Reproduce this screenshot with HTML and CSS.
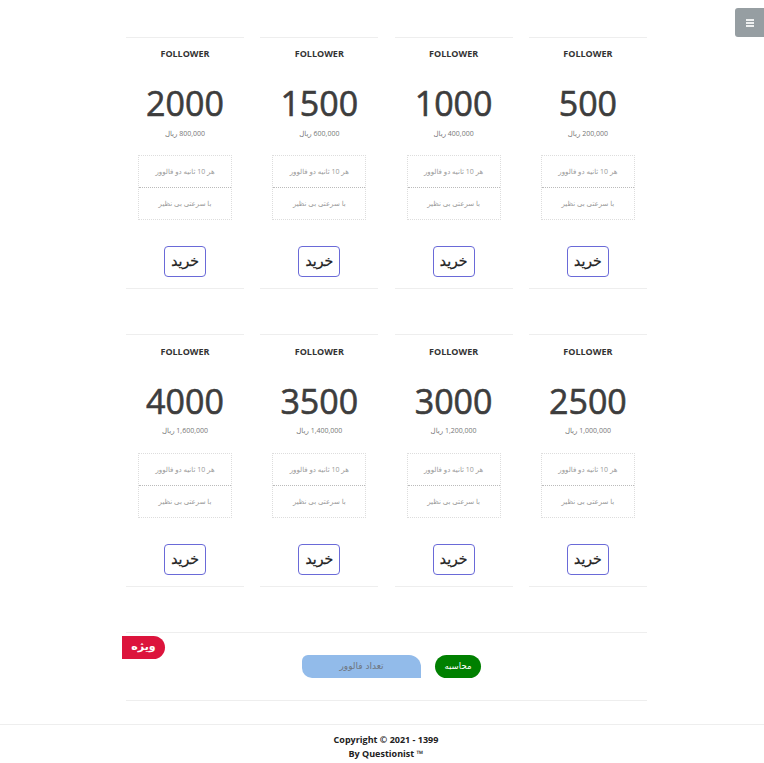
FILE: index.html
```html
<!DOCTYPE html>
<html lang="fa">
<head>
  <meta charset="utf-8" />
  <title>Follower</title>
  <link rel="stylesheet" href="styles.css">
</head>
<body>
  <a class="menu-btn"><span></span><span></span><span></span></a>

  <div class="wrapper">
    <div class="plans">
      <div class="plan">
        <p class="plan-title">FOLLOWER</p>
        <p class="plan-count">2000</p>
        <p class="plan-price" dir="rtl">800,000 ریال</p>
        <ul class="plan-info" dir="rtl">
          <li>هر 10 ثانیه دو فالوور</li>
          <li>با سرعتی بی نظیر</li>
        </ul>
        <a class="buy-btn">خرید</a>
      </div>
      <div class="plan">
        <p class="plan-title">FOLLOWER</p>
        <p class="plan-count">1500</p>
        <p class="plan-price" dir="rtl">600,000 ریال</p>
        <ul class="plan-info" dir="rtl">
          <li>هر 10 ثانیه دو فالوور</li>
          <li>با سرعتی بی نظیر</li>
        </ul>
        <a class="buy-btn">خرید</a>
      </div>
      <div class="plan">
        <p class="plan-title">FOLLOWER</p>
        <p class="plan-count">1000</p>
        <p class="plan-price" dir="rtl">400,000 ریال</p>
        <ul class="plan-info" dir="rtl">
          <li>هر 10 ثانیه دو فالوور</li>
          <li>با سرعتی بی نظیر</li>
        </ul>
        <a class="buy-btn">خرید</a>
      </div>
      <div class="plan">
        <p class="plan-title">FOLLOWER</p>
        <p class="plan-count">500</p>
        <p class="plan-price" dir="rtl">200,000 ریال</p>
        <ul class="plan-info" dir="rtl">
          <li>هر 10 ثانیه دو فالوور</li>
          <li>با سرعتی بی نظیر</li>
        </ul>
        <a class="buy-btn">خرید</a>
      </div>
      <div class="plan">
        <p class="plan-title">FOLLOWER</p>
        <p class="plan-count">4000</p>
        <p class="plan-price" dir="rtl">1,600,000 ریال</p>
        <ul class="plan-info" dir="rtl">
          <li>هر 10 ثانیه دو فالوور</li>
          <li>با سرعتی بی نظیر</li>
        </ul>
        <a class="buy-btn">خرید</a>
      </div>
      <div class="plan">
        <p class="plan-title">FOLLOWER</p>
        <p class="plan-count">3500</p>
        <p class="plan-price" dir="rtl">1,400,000 ریال</p>
        <ul class="plan-info" dir="rtl">
          <li>هر 10 ثانیه دو فالوور</li>
          <li>با سرعتی بی نظیر</li>
        </ul>
        <a class="buy-btn">خرید</a>
      </div>
      <div class="plan">
        <p class="plan-title">FOLLOWER</p>
        <p class="plan-count">3000</p>
        <p class="plan-price" dir="rtl">1,200,000 ریال</p>
        <ul class="plan-info" dir="rtl">
          <li>هر 10 ثانیه دو فالوور</li>
          <li>با سرعتی بی نظیر</li>
        </ul>
        <a class="buy-btn">خرید</a>
      </div>
      <div class="plan">
        <p class="plan-title">FOLLOWER</p>
        <p class="plan-count">2500</p>
        <p class="plan-price" dir="rtl">1,000,000 ریال</p>
        <ul class="plan-info" dir="rtl">
          <li>هر 10 ثانیه دو فالوور</li>
          <li>با سرعتی بی نظیر</li>
        </ul>
        <a class="buy-btn">خرید</a>
      </div>
    </div>

    <div class="special">
      <span class="special-tag">ویژه</span>
      <input class="count-input" type="text" dir="rtl" placeholder="تعداد فالوور" />
      <a class="calc-btn">محاسبه</a>
    </div>
  </div>

  <div class="footer">
    <p>Copyright © 2021 - 1399</p>
    <p>By Questionist ™</p>
  </div>
</body>
</html>
```

FILE: styles.css
```css
html, body {
  height: 100%;
  overflow: hidden;
}

body {
  margin: 0;
  background: #FFF;
  color: #333;
  font: normal 14px/20px "Open Sans", "DejaVu Sans", sans-serif;
}

p {
  margin: 0;
}

a {
  cursor: pointer;
}

.menu-btn {
  position: absolute;
  top: 8px;
  right: 0;
  width: 29px;
  height: 29px;
  border-radius: 3px 0 0 3px;
  background: #969EA2;
  display: flex;
  flex-direction: column;
  justify-content: center;
  align-items: center;
  gap: 1px;
}

.menu-btn span {
  width: 8px;
  height: 2px;
  background: #EEF0F0;
}

.wrapper {
  width: 521px;
  margin: 0 0 0 126px;
  padding: 36.6px 0 0;
}

.plans {
  display: grid;
  grid-template-columns: repeat(4, 118px);
  column-gap: 16.3px;
  row-gap: 45.6px;
}

.plan {
  height: 250.2px;
  border-top: solid 1px #EEE;
  border-bottom: solid 1px #EEE;
  display: flex;
  flex-direction: column;
  align-items: center;
}

.plan-title {
  margin: 6.2px 0 0;
  font: 700 9px/20px "Open Sans", sans-serif;
  color: #333;
}

.plan-count {
  margin: 17.4px 0 0;
  font: normal 34px/44px "Open Sans", sans-serif;
  -webkit-text-stroke: 0.6px #3D3D3D;
  color: #3D3D3D;
}

.plan-price {
  margin: 2.5px 0 0;
  font: normal 7px/12px "Open Sans", "DejaVu Sans", sans-serif;
  color: #777;
}

.plan-info {
  width: 94px;
  margin: 15.5px 0 0;
  padding: 0;
  list-style: none;
  border: dotted 1px #DDD;
  box-sizing: border-box;
}

.plan-info li {
  height: 31px;
  font: normal 7px/31px "Open Sans", "DejaVu Sans", sans-serif;
  color: #999;
  text-align: center;
}

.plan-info li + li {
  border-top: dotted 1px #BBB;
}

.buy-btn {
  width: 42px;
  height: 31px;
  margin: 26px 0 0;
  box-sizing: border-box;
  border: solid 1px #6A6AD8;
  border-radius: 4px;
  font: normal 14px/28px "DejaVu Sans", sans-serif;
  -webkit-text-stroke: 0.3px #222;
  color: #222;
  text-align: center;
}

.special {
  position: relative;
  height: 69px;
  margin: 45.4px 0 0;
  border-top: solid 1px #EEE;
  border-bottom: solid 1px #EEE;
  display: flex;
  justify-content: center;
  align-items: flex-start;
  gap: 14px;
  padding: 22px 0 0 10px;
  box-sizing: border-box;
}

.special-tag {
  position: absolute;
  top: 3px;
  left: -4px;
  width: 43px;
  height: 23px;
  border-radius: 0 12px 12px 0;
  background: #DC143C;
  color: #FFF;
  font: bold 11px/22px "DejaVu Sans", sans-serif;
  text-align: center;
}

.count-input {
  width: 119px;
  height: 23px;
  padding: 0;
  border: none;
  border-radius: 6px 12px 0 10px;
  background: #92BBEA;
  font: normal 9px/23px "DejaVu Sans", sans-serif;
  text-align: center;
}

.count-input::placeholder {
  color: #6F7680;
}

.calc-btn {
  width: 46px;
  height: 23px;
  border-radius: 12px;
  background: #008000;
  color: #FFF;
  font: normal 8.6px/23px "DejaVu Sans", sans-serif;
  text-align: center;
}

.footer {
  margin: 23px 0 0;
  padding: 8px 0 0 8px;
  border-top: solid 1px #EEE;
  text-align: center;
}

.footer p {
  font: 700 9px/14px "Open Sans", sans-serif;
  color: #222;
}
```
